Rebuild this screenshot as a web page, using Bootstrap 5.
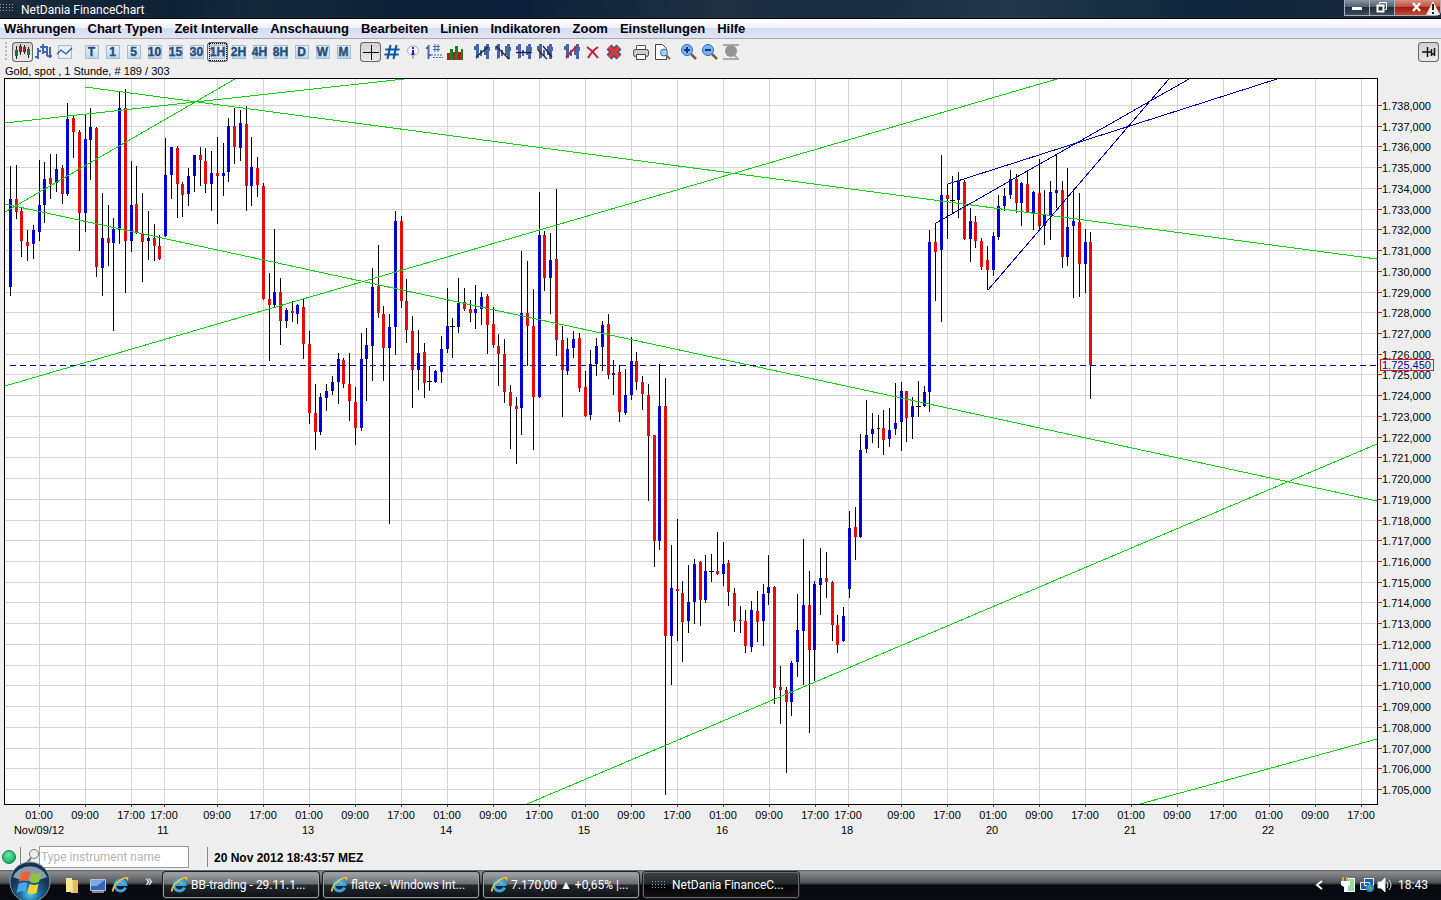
<!DOCTYPE html>
<html lang="de">
<head>
<meta charset="utf-8">
<meta name="viewport" content="width=device-width, initial-scale=1">
<title>NetDania FinanceChart</title>
<link rel="stylesheet" href="https://cdn.jsdelivr.net/npm/bootstrap@5.3.0/dist/css/bootstrap.min.css">
<style>
body{height:100vh;background:#eee;font-family:"Liberation Sans",Arial,sans-serif;font-size:11px;line-height:14px;color:#000}
button{padding:0;border:0;background:none;color:inherit}
svg{display:block}
.titlebar{height:19px;background:linear-gradient(100deg,#1b2b3b 0,#0d2136 12%,#16293b 18%,#0c1f36 28%,#0b2038 36%,#1f3042 50%,#182b3f 58%,#22374b 70%,#10263c 84%,#1a2c3f 100%);border-bottom:1px solid #000;color:#fff;font-family:Roboto,"Noto Sans",sans-serif;font-size:12px;line-height:20px}
.dots{width:16px;height:10px;margin:3px 6px 0 -1px;background:radial-gradient(circle,#9aa4ae 0 1px,transparent 1px) 0 0/3px 3px}
.wbtn{height:16px;border:1px solid #a5b0ba;border-top:0;background:linear-gradient(#8795a3,#4b5b6b 50%,#1f2d3b 50%,#3c4c5c);margin-left:-1px}
.wbtn.close-w{background:linear-gradient(#d89080,#c04a38 50%,#9c1f10 50%,#c8492f);border-radius:0 0 5px 0}
.menubar{height:20px;padding:0 4px;background:linear-gradient(#fff,#eff2fb 45%,#d6dcf2 50%,#dde2f5 90%);border-bottom:1px solid #a9a9a9}
.menubar button{font-size:13px;font-weight:bold;line-height:20px;white-space:nowrap}
.toolbar{height:26px;padding:0 2px 0 5px}
.grip{width:2px;height:20px;margin-right:5px;background:repeating-linear-gradient(#bbb 0 2px,transparent 2px 4px)}
.tool{width:21px;height:20px;display:flex;align-items:center;justify-content:center;border-radius:4px}
.tool.on{box-shadow:inset 0 0 0 1px #666;background:linear-gradient(#d0d0d0,#ececec)}
.tool svg{width:18px;height:18px}
.period{width:14px;height:14px;display:flex;align-items:center;justify-content:center;background:linear-gradient(#eaf4fd,#bcd8f2);border:1px solid #a4bcd6;color:#2c4d78;font-size:12px;font-weight:bold;line-height:14px;-webkit-text-stroke:.4px #2c4d78}
.tool.on .period{outline:1px dotted #000;outline-offset:1px}
.caption{height:13px;padding-left:5px;line-height:13px}
.statusbar{height:26px;padding-left:2px}
.led{width:14px;height:14px;border-radius:50%;background:radial-gradient(circle at 45% 35%,#6fe9a6,#1db968 65%,#0c8a48);border:1px solid #137a45}
.vline{width:1px;height:20px;background:#888}
.search{width:150px;height:22px;border:1px solid #999;background:#fff;padding:0 1px;font:12px/20px Roboto,"Noto Sans",sans-serif;outline:0}
.search::placeholder{color:#b4b4b4;opacity:1}
.clock{font-size:12px;font-weight:bold;padding-top:2px}
.taskbar{height:30px;background:linear-gradient(#5c6064,#8a8d90 2px,#55595d 12px,#34383c 14px,#05080c 15px,#080c10 100%);color:#fff;font-family:Roboto,"Noto Sans",sans-serif;font-size:12px}
.orb{width:42px;height:42px;margin:-10px 12px 0 9px;overflow:visible}
.more{width:18px;height:26px;line-height:14px;font-size:16px;text-align:left;padding-bottom:8px}
.task{width:156px;height:26px;padding-left:6px;border:1px solid #9a9da0;border-radius:3px;background:linear-gradient(#a0a3a6,#686c70 11px,#24282c 12px,#101418);text-align:left;white-space:nowrap;box-shadow:0 0 0 1px #222}
.task svg{flex:none;margin-right:3px}
.task.active{background:linear-gradient(#3b3e41,#25282b 11px,#050505 12px,#111);border-color:#666}
.task .dots{margin:0 5px 0 1px}
.tray{padding-right:13px}
#chart{width:100%;height:100%}
#chart text{font-size:11px}
</style>
</head>
<body class="d-flex flex-column overflow-hidden">
<svg class="d-none">
<symbol id="ie" viewBox="0 0 18 18"><path d="M14.600 11.500a5.500 5.500 0 1 1 .300-3H6" fill="none" stroke="#38a6ea" stroke-width="3"/><path d="M5.500 7.500a4 3 0 0 1 7 0" fill="none" stroke="#a6e2ff"/><path d="M1.500 16C-1 13 7 2 15 1c4 0 2 3 1 4 .500-3-1.500-3-4-1.500C7 6 2 12 3 15z" fill="#f3c82c"/></symbol>
<symbol id="bars" viewBox="0 0 18 18"><path d="M1 3h2V1h3v14H4v1H3V7H1zM7 7h2v6H7zM11 3h2V1h3v3h1v4h-1v8h-3v-4h-2z" fill="#4666ac"/></symbol>
<symbol id="glass" viewBox="0 0 18 18"><path d="M11 11l5 5" stroke="#8c5932" stroke-width="2.500"/><circle cx="7" cy="7" r="5.500" fill="#76b4f2" stroke="#2f6db8"/></symbol>
</svg>

<header class="titlebar d-flex flex-shrink-0">
<div class="dots"></div><div class="flex-grow-1">NetDania FinanceChart</div>
<div class="d-flex">
<button class="wbtn" style="width:26px" aria-label="Minimieren"><svg width="24" height="15"><path d="M7 8.500h10" stroke="#fff" stroke-width="3"/></svg></button>
<button class="wbtn" style="width:26px" aria-label="Wiederherstellen"><svg width="24" height="15" fill="none" stroke="#fff"><path d="M9.500 4V2.500h7v7H15" /><path d="M7.500 5.500h6v6h-6z" stroke-width="2"/></svg></button>
<button class="wbtn close-w" style="width:47px" aria-label="Schließen"><svg width="45" height="15"><path d="M18 3l7 8M25 3l-7 8" stroke="#fff" stroke-width="2.500"/><path d="M38 1l7 14H31z" fill="#eee"/><path d="M38 4v6M38 12v2" stroke="#222" stroke-width="2"/></svg></button>
</div>
</header>

<nav class="menubar d-flex flex-shrink-0" style="column-gap:12px">
<button>Währungen</button><button>Chart Typen</button><button>Zeit Intervalle</button><button>Anschauung</button><button>Bearbeiten</button><button>Linien</button><button>Indikatoren</button><button>Zoom</button><button>Einstellungen</button><button>Hilfe</button>
</nav>

<div class="toolbar d-flex align-items-center flex-shrink-0">
<div class="grip"></div>
<div class="d-flex flex-grow-1" style="column-gap:6px">
<div class="d-flex">
<button class="tool on" aria-label="Kerzen"><svg viewBox="0 0 18 18"><path d="M2.500 3v13M6.500 1v11M10.500 2v9M14.500 4v11" stroke="#222"/><path d="M1 7h3v6H1zM13 6h3v6h-3z" fill="#157a25"/><path d="M5 3h3v6H5zM9 4h3v5H9z" fill="#a01c2c"/></svg></button>
<button class="tool" aria-label="Balken"><svg viewBox="0 0 18 18" fill="none" stroke="#4568ae" stroke-width="2"><path d="M3 5v11M0 14h3M3 8h3M8 1v10M5 4h8M8 9h3M12 3v10M15 4v11M12 13h5"/></svg></button>
<button class="tool" aria-label="Linie"><svg viewBox="0 0 18 18"><path d="M2.500 2.500h13v13h-13z" fill="#e3effa" stroke="#a4bcd6"/><path d="M1 11l4-4 5 4 6-6" fill="none" stroke="#34567f" stroke-width="1.300"/></svg></button>
</div>
<div class="d-flex" id="periods"></div>
<div class="d-flex">
<button class="tool on" aria-label="Fadenkreuz"><svg viewBox="0 0 18 18"><path d="M1 9.500h16M9.500 2v15" stroke="#000"/></svg></button>
<button class="tool" aria-label="Raster"><svg viewBox="0 0 18 18"><path d="M7.500 2L4.500 16M13.500 2l-3 14M2.500 6.500h14M1.500 11.500h14" stroke="#0b55a5" stroke-width="2"/></svg></button>
<button class="tool" aria-label="Info"><svg viewBox="0 0 18 18"><path d="M9 3c7 0 7 9 1 9l-1 4-1-4C2 12 2 3 9 3z" fill="#f8f8ff" stroke="#a4a4b8"/><path d="M9 4v2M9 7v4M7.500 11h3" stroke="#2323d0" stroke-width="2"/></svg></button>
<button class="tool" aria-label="Werte"><svg viewBox="0 0 18 18" fill="none" stroke="#4568ae"><path d="M3.500 2v14M1 5h3M3 12h3" stroke-width="2"/><path d="M10 1v8M13 1v8M8 3.500h7M8 6.500h7"/><path d="M6 12h12M8 14.500h10" stroke-dasharray="2 1"/></svg></button>
<button class="tool" aria-label="Volumen"><svg viewBox="0 0 18 18"><path d="M1 10h3v7H1zM7 9h2v8H7zM12 9h3v8h-3z" fill="#b01c18"/><path d="M4 6h3v11H4zM9 3h3v14H9zM15 6h2v11h-2z" fill="#16821c"/></svg></button>
</div>
<div class="d-flex">
<button class="tool" aria-label="Trendlinie"><svg viewBox="0 0 18 18"><use href="#bars"/><path d="M3 14L15 4" stroke="#223" stroke-width="1.300"/></svg></button>
<button class="tool" aria-label="Trendlinie abwärts"><svg viewBox="0 0 18 18"><use href="#bars"/><path d="M2 3l13 13" stroke="#223" stroke-width="1.300"/></svg></button>
<button class="tool" aria-label="Horizontale"><svg viewBox="0 0 18 18"><use href="#bars"/><path d="M1 9.500h16" stroke="#223" stroke-width="1.300"/></svg></button>
<button class="tool" aria-label="Kanal"><svg viewBox="0 0 18 18"><use href="#bars"/><path d="M2 7l9 9M7 3l9 11" stroke="#223" stroke-width="1.300"/></svg></button>
</div>
<div class="d-flex">
<button class="tool" aria-label="Linie bearbeiten"><svg viewBox="0 0 18 18"><use href="#bars"/><path d="M3 14L14 3" stroke="#c02045" stroke-width="2"/></svg></button>
<button class="tool" aria-label="Linie löschen"><svg viewBox="0 0 18 18"><path d="M3 4q6 4 11 11M14 4Q8 8 4 15" fill="none" stroke="#c51a38" stroke-width="2"/></svg></button>
<button class="tool" aria-label="Alle löschen"><svg viewBox="0 0 18 18"><path d="M4 4l10 10M14 4L4 14" stroke="#31508e" stroke-width="7"/><path d="M4 4l10 10M14 4L4 14" stroke="#d83a3a" stroke-width="4"/></svg></button>
</div>
<div class="d-flex">
<button class="tool" aria-label="Drucken"><svg viewBox="0 0 18 18"><path d="M4.500 2.500h9v5h-9z" fill="#fff" stroke="#555"/><rect x="1.500" y="6.500" width="15" height="7" rx="2" fill="#c9cec9" stroke="#444"/><path d="M4.500 11.500h9v5h-9z" fill="#fff" stroke="#444"/></svg></button>
<button class="tool" aria-label="Druckvorschau"><svg viewBox="0 0 18 18"><path d="M2.500 1.500h7l4 4v11h-11z" fill="#fff" stroke="#444"/><path d="M13 12l4 4" stroke="#8c5932" stroke-width="2"/><circle cx="11" cy="9.500" r="3.500" fill="#a5d0f5" stroke="#2f6db8"/></svg></button>
</div>
<div class="d-flex">
<button class="tool" aria-label="Vergrößern"><svg viewBox="0 0 18 18"><use href="#glass"/><path d="M4 7h6M7 4v6" stroke="#123a80" stroke-width="2"/></svg></button>
<button class="tool" aria-label="Verkleinern"><svg viewBox="0 0 18 18"><use href="#glass"/><path d="M4 7h6" stroke="#123a80" stroke-width="2"/></svg></button>
<button class="tool" aria-label="Zoom zurücksetzen"><svg viewBox="0 0 18 18"><path d="M1 2h16M1 16h16M11 11l5 5" stroke="#aaa" stroke-width="2"/><circle cx="9" cy="8" r="6" fill="#959595"/></svg></button>
</div>
</div>
<button class="tool on" aria-label="Anheften"><svg viewBox="0 0 18 18"><path d="M2 9h5M7.500 4v10M8 9h3M11.500 6v7M14.500 5v8M11 11h4" stroke="#111" stroke-width="1.500"/></svg></button>
</div>

<div class="caption flex-shrink-0">Gold, spot , 1 Stunde, # 189 / 303</div>
<main class="flex-grow-1" style="min-height:0"><svg id="chart" role="img" aria-label="Gold, spot"></svg></main>

<div class="statusbar d-flex align-items-center flex-shrink-0">
<div class="led"></div><div class="vline ms-1"></div>
<label for="instrument" class="ps-1" aria-label="Type instrument name"><svg width="14" height="18" fill="none" stroke="#777"><path d="M6 10l-5 6" stroke-width="2"/><circle cx="9" cy="6" r="4.500"/></svg></label>
<input id="instrument" class="search" type="text" placeholder="Type instrument name">
<div class="d-flex align-items-center" style="column-gap:6px;margin-left:18px"><div class="vline"></div><div class="clock">20 Nov 2012 18:43:57 MEZ</div></div>
</div>

<footer class="taskbar d-flex align-items-center flex-shrink-0">
<button class="orb" aria-label="Start"><svg width="42" height="42" viewBox="0 0 42 42"><defs><radialGradient id="og" cy=".8"><stop offset="0" stop-color="#55cdf5"/><stop offset=".5" stop-color="#1e6296"/><stop offset="1" stop-color="#143450"/></radialGradient></defs><circle cx="21" cy="23" r="20" fill="url(#og)" stroke="#7d98aa"/><path d="M4 18a18 16 0 0 1 34 0q-17 8-34 0z" fill="#d3e2ed" opacity=".6"/><path d="M12 14q4.500-3 9-1l-2 9q-4.500-2-9 1z" fill="#ee6230"/><path d="M23 14q4.500 2 9 0l-2 9q-4.500 2-9 0z" fill="#8dc63c"/><path d="M9.500 25q4.500-3 9-1l-2 9q-4.500-2-9 1z" fill="#4aa3e8"/><path d="M20.500 25q4.500 2 9 0l-2 9q-4.500 2-9 0z" fill="#fbd236"/></svg></button>
<button aria-label="Ordner"><svg width="18" height="18"><path d="M3 2h6v14H3z" fill="#f9e792"/><path d="M9 4h6v13H8z" fill="#e3bd55"/><path d="M9 4v13" stroke="#fff4b5"/></svg></button>
<button class="ms-2" aria-label="Desktop"><svg width="18" height="18"><path d="M1.500 3.500h15v11h-15z" fill="#3764bc" stroke="#b9c4d2"/><path d="M2 4h14l-8 6H2z" fill="#7ba7e8"/><path d="M3 15h12v2H3z" fill="#888"/></svg></button>
<button class="ms-1" aria-label="Internet Explorer"><svg width="18" height="18"><use href="#ie"/></svg></button>
<button class="more ms-3">»</button>
<div class="d-flex gap-1">
<button class="task d-flex align-items-center"><svg width="18" height="18"><use href="#ie"/></svg>BB-trading - 29.11.1...</button>
<button class="task d-flex align-items-center"><svg width="18" height="18"><use href="#ie"/></svg>flatex - Windows Int...</button>
<button class="task d-flex align-items-center"><svg width="18" height="18"><use href="#ie"/></svg>7.170,00 ▲ +0,65% |...</button>
<button class="task active d-flex align-items-center"><span class="dots"></span>NetDania FinanceC...</button>
</div>
<div class="tray ms-auto d-flex align-items-center">
<button class="me-3" aria-label="Ausgeblendete Symbole"><svg width="10" height="12"><path d="M8 2L3 6l5 4" fill="none" stroke="#fff" stroke-width="2"/></svg></button>
<svg width="18" height="18"><path d="M7.500 2.500h7v13h-7z" fill="#8fe0a0" stroke="#fff"/><path d="M3 1v4M7 1v4" stroke="#e5a136" stroke-width="2"/><path d="M1 5h9v4l-3 2v5H4v-5L1 9z" fill="#fff"/></svg>
<svg width="18" height="18"><path d="M6.500 2.500h9v7h-9zM2.500 6.500h9v7h-9z" fill="#165daa" stroke="#e0eefa"/><circle cx="12" cy="12" r="4" fill="#2689dc"/><path d="M10 9l4 2-1 4-3-3z" fill="#4ac045"/></svg>
<svg class="me-1" width="18" height="18" fill="none" stroke="#e6e6e6"><path d="M2 6h3l4-4v14l-4-4H2z" fill="#fff"/><path d="M11 6q2 3 0 6M13 4q4 5 0 10"/></svg>
<span>18:43</span>
</div>
</footer>

<script src="https://cdn.jsdelivr.net/npm/bootstrap@5.3.0/dist/js/bootstrap.bundle.min.js"></script>
<script>
document.getElementById('periods').innerHTML = 'T 1 5 10 15 30 1H 2H 4H 8H D W M'.split(' ')
  .map(p => `<button class="tool${p === '1H' ? ' on' : ''}"><span class="period">${p}</span></button>`).join('');

// One hourly candle per entry: high, low, body top, body bottom, b = up / r = down / k = unchanged
const candles = `166 296 199 287 b,165 219 199 212 r,207 257 211 241 r,230 261 242 246 r,225 259 230 244 b,160 241 205 232 b,162 223 179 205 b,154 199 178 184 r,154 192 169 183 b,165 204 168 194 r,
103 196 119 194 b,116 158 118 132 r,130 251 132 213 r,115 232 139 213 b,108 180 127 140 b,127 277 128 267 r,193 296 238 268 b,205 266 238 243 r,218 331 229 243 b,91 244 108 230 b,
89 293 108 241 r,161 252 205 241 b,166 234 204 233 r,193 282 233 242 r,211 260 238 241 b,224 261 238 246 r,235 260 246 259 r,138 237 175 236 b,147 199 147 175 b,146 218 148 184 r,
182 217 184 195 r,168 206 176 194 b,155 192 155 176 b,147 186 155 160 r,148 193 161 184 r,151 211 173 184 b,137 224 173 176 r,143 196 173 176 b,118 182 126 172 b,108 164 126 147 r,
110 161 123 148 b,106 211 124 186 r,137 206 167 186 b,157 197 168 185 r,183 300 186 299 r,273 361 299 305 r,229 307 292 305 b,278 345 292 321 r,308 328 310 321 b,301 322 311 313 r,
304 324 305 314 b,299 359 307 344 r,331 424 344 413 r,384 450 413 432 r,393 435 397 432 b,384 411 391 398 b,376 395 382 391 b,353 404 359 382 b,358 388 360 384 r,353 421 384 401 r,
387 445 402 428 r,333 431 359 428 b,328 401 345 359 b,268 381 287 346 b,245 318 286 313 r,306 381 314 348 r,314 524 327 348 b,211 355 221 327 b,216 308 221 301 r,279 343 301 330 r,
316 408 331 370 r,330 390 353 370 b,343 398 352 383 r,366 391 381 382 k,370 383 371 382 b,336 383 349 372 b,288 353 326 349 b,318 358 326 327 k,278 333 303 327 b,288 311 302 309 r,
300 322 309 313 r,285 329 309 313 b,292 325 297 309 b,294 354 296 325 r,307 348 324 345 r,334 386 346 354 r,339 403 354 392 r,385 449 392 406 r,397 464 406 409 r,251 435 313 408 b,
261 366 313 326 r,289 450 326 397 r,192 398 235 397 b,231 291 235 278 r,233 314 260 278 b,189 356 259 340 r,326 417 340 370 r,338 375 349 371 b,331 358 339 348 b,333 392 338 388 r,
371 417 387 416 r,350 420 364 415 b,338 376 346 364 b,321 371 325 347 b,314 379 324 375 r,360 395 373 375 b,365 422 372 412 r,369 415 395 413 b,337 400 361 395 b,352 390 361 382 r,
376 410 382 394 r,384 501 395 436 r,435 567 435 541 r,364 550 406 541 b,378 795 406 636 r,545 685 588 636 b,519 641 589 591 r,581 662 593 622 r,565 633 602 621 b,559 624 564 602 b,
561 626 562 600 r,555 603 571 600 b,554 582 571 572 k,532 575 571 574 r,542 586 564 574 b,560 606 563 592 r,588 632 593 621 r,606 633 620 621 r,610 653 621 646 r,601 652 610 647 b,
591 642 611 622 r,584 646 594 621 b,555 605 587 593 b,586 704 587 688 r,666 724 687 690 r,687 773 690 702 r,661 716 663 702 b,594 677 630 662 b,539 685 605 631 b,571 733 605 650 r,
581 681 584 650 b,548 615 578 585 b,552 598 578 582 r,581 641 582 625 r,615 653 625 645 r,607 642 616 641 b,511 598 528 589 b,507 560 527 537 r,434 538 450 537 b,400 453 435 449 b,
413 443 429 434 b,415 448 428 429 b,410 455 428 440 r,408 447 430 439 b,383 435 423 429 b,382 451 391 422 b,391 442 391 418 r,397 439 406 417 b,381 417 406 407 k,386 407 392 406 b,
230 412 242 392 b,223 301 242 252 r,155 322 195 250 b,184 239 195 199 r,176 214 200 201 k,172 218 181 200 b,180 240 182 239 r,208 262 221 239 b,216 248 222 241 r,238 270 241 267 r,
246 290 260 270 r,232 276 236 270 b,195 240 206 237 b,188 211 196 206 b,170 199 179 195 b,174 213 179 203 r,182 226 183 203 b,171 213 184 212 r,191 230 192 213 b,159 229 193 226 r,
190 245 214 226 b,181 240 192 215 b,155 208 190 193 b,181 268 190 257 r,168 266 227 257 b,189 298 221 226 b,193 297 222 264 r,229 293 242 264 b,232 399 242 365 r`
  .split(',').map(c => c.trim().split(' '));
const trends = [[5,123,404,79],[5,212,235,79],[85,87,1377,259],[5,204,1377,501],[5,386,1057,79],[527,804,1377,444],[1140,804,1377,739]];
const wedges = [[948,184,1277,79],[936,223,1189,79],[988,290,1169,79]];
const hours = [[39,'01'],[85,'09'],[131,'17'],[164,'17'],[217,'09'],[263,'17'],[309,'01'],[355,'09'],[401,'17'],[447,'01'],[493,'09'],[539,'17'],[585,'01'],[631,'09'],[677,'17'],[723,'01'],[769,'09'],[815,'17'],[848,'17'],[901,'09'],[947,'17'],[993,'01'],[1039,'09'],[1085,'17'],[1131,'01'],[1177,'09'],[1223,'17'],[1269,'01'],[1315,'09'],[1361,'17']];
const days = [[39,'Nov/09/12'],[163,'11'],[308,'13'],[446,'14'],[584,'15'],[722,'16'],[847,'18'],[992,'20'],[1130,'21'],[1268,'22']];
const chart = document.getElementById('chart');

function draw() {
  const box = chart.getBoundingClientRect(), left = 4, right = Math.round(box.width) - 64, bottom = Math.round(box.height) - 40;
  const X = x => Math.round(left + (x - 4) * (right - left) / 1373);
  const Y = y => Math.round((y - 78) * bottom / 726);
  const line = (a, b, c, d, s, extra = '') => `<line x1="${a}" y1="${b}" x2="${c}" y2="${d}" stroke="${s}" ${extra}/>`;
  const crisp = 'shape-rendering="crispEdges"';
  let o = `<rect x="${left}" y="0" width="${right - left}" height="${bottom}" fill="#fff"/>`;
  for (const [x, h] of hours) {
    const p = X(x) + .5;
    o += line(p, 0, p, bottom, '#d4d4d4', crisp) + line(p, bottom, p, bottom + 3, '#a02030', crisp);
    o += `<text x="${X(x)}" y="${bottom + 15}" text-anchor="middle">${h}:00</text>`;
  }
  for (const [x, d] of days) o += `<text x="${X(x)}" y="${bottom + 30}" text-anchor="middle">${d}</text>`;
  for (let i = 0; i < 34; i++) {
    const y = Y(105 + i * 684 / 33);
    o += line(left, y + .5, right, y + .5, '#d4d4d4', crisp) + line(right, y + .5, right + 5, y + .5, '#d01818', crisp);
    o += `<text x="${right + 5}" y="${y + 5}">1.${738 - i},000</text>`;
  }
  candles.forEach(([hi, lo, top, bot, kind], i) => {
    const x = X(10 + i * 5.746), color = { b: '#0000d8', r: '#e60c0c', k: '#000' }[kind];
    o += `<rect x="${x}" y="${Y(hi)}" width="1" height="${Y(lo) - Y(hi)}"/>`;
    const w = kind === 'k' ? 5 : 3;
    o += `<rect x="${x - (w - 1) / 2}" y="${Y(top)}" width="${w}" height="${Math.max(1, Y(bot) - Y(top))}" fill="${color}"/>`;
  });
  for (const [a, b, c, d] of trends) o += line(X(a), Y(b), X(c), Y(d), '#10d010', crisp);
  for (const [a, b, c, d] of wedges) o += line(X(a), Y(b), X(c), Y(d), '#0000b0', crisp);
  const now = Y(365);
  o += line(X(10), now + .5, right, now + .5, '#0000a0', crisp + ' stroke-dasharray="6 4"');
  o += `<path d="M${left + .5} .5H${right + .5}V${bottom + .5}H${left + .5}z" fill="none" stroke="#000" ${crisp}/>`;
  o += `<rect x="${right + 3.5}" y="${now - 5.5}" width="53" height="11" fill="#eee" stroke="#e01818"/>`;
  o += `<text x="${right + 5}" y="${now + 4}" fill="#0000a8">1.725,450</text>`;
  chart.innerHTML = o;
}
draw();
addEventListener('resize', draw);
</script>
</body>
</html>
